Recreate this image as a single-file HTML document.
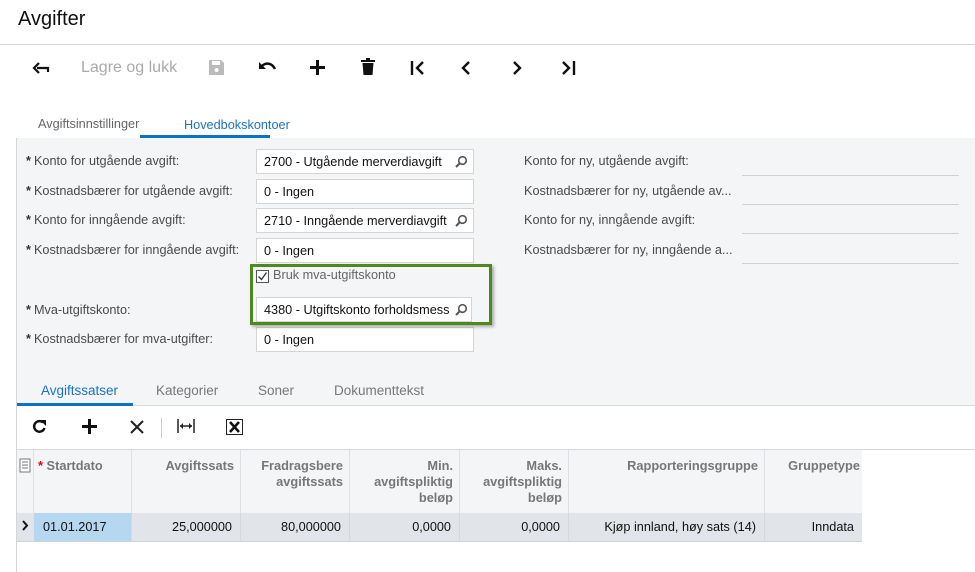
<!DOCTYPE html>
<html><head><meta charset="utf-8"><style>
*{margin:0;padding:0;box-sizing:border-box}
body{width:975px;height:572px;overflow:hidden;background:#fff;font-family:"Liberation Sans",Arial,sans-serif;position:relative;color:#222}
.a{position:absolute}
.lbl{position:absolute;font-size:12.7px;color:#4a4a4a;white-space:nowrap}
.lbl b{font-weight:bold;color:#333;margin-right:3px}
.inp{position:absolute;left:256px;width:218px;height:25px;background:#fff;border:1px solid #d5d5d5;font-size:12.7px;padding:5px 0 0 7px;color:#111;white-space:nowrap;overflow:hidden}
.ul{position:absolute;left:742px;width:217px;border-bottom:1px solid #d0d0d0}
.th{position:absolute;top:450px;height:63px;border-right:1px solid #dde0e4;font-size:12.8px;font-weight:bold;color:#777;text-align:right;padding:8px 6px 0 0;line-height:16px}
.td{position:absolute;top:513px;height:28px;font-size:12.7px;text-align:right;padding:7px 8px 0 0;color:#111;border-right:1px solid #d5d8dc}
svg{position:absolute}
</style></head><body>
<div class="a" style="left:18px;top:8px;font-size:20px;color:#111">Avgifter</div>
<div class="a" style="left:0;top:44px;width:975px;border-top:1px solid #d5d5d5"></div>
<svg style="left:32px;top:60px" width="18" height="16" viewBox="0 0 18 16"><path d="M16 12V8H5" stroke="#111" stroke-width="2.2" fill="none"/><path d="M7 3L2 8l5 5" stroke="#111" stroke-width="2.2" fill="none"/></svg>
<div class="a" style="left:81px;top:59px;font-size:16px;color:#aaa">Lagre og lukk</div>
<svg style="left:208px;top:59px" width="17" height="17" viewBox="0 0 17 17"><path d="M1 1h12l3 3v12H1z" fill="#bbb"/><rect x="4" y="2" width="8" height="4" fill="#fff"/><circle cx="8.5" cy="11" r="2" fill="#fff"/></svg>
<svg style="left:258px;top:60px" width="20" height="14" viewBox="0 0 20 14"><path d="M4 6c4-4 10-3 13 3" stroke="#111" stroke-width="2.5" fill="none"/><path d="M1 2v7h7z" fill="#111"/></svg>
<svg style="left:310px;top:60px" width="15" height="15" viewBox="0 0 15 15"><path d="M7.5 0v15M0 7.5h15" stroke="#111" stroke-width="3"/></svg>
<svg style="left:361px;top:58px" width="14" height="17" viewBox="0 0 14 17"><rect x="0" y="2" width="14" height="2" fill="#111"/><rect x="5" y="0" width="4" height="2" fill="#111"/><path d="M1.5 5h11l-1 12h-9z" fill="#111"/></svg>
<svg style="left:410px;top:60px" width="16" height="16" viewBox="0 0 16 16"><path d="M2 1v14" stroke="#111" stroke-width="2.4"/><path d="M13 2L7 8l6 6" stroke="#111" stroke-width="2.4" fill="none"/></svg>
<svg style="left:460px;top:60px" width="12" height="16" viewBox="0 0 12 16"><path d="M9 2L3 8l6 6" stroke="#111" stroke-width="2.4" fill="none"/></svg>
<svg style="left:511px;top:60px" width="12" height="16" viewBox="0 0 12 16"><path d="M3 2l6 6-6 6" stroke="#111" stroke-width="2.4" fill="none"/></svg>
<svg style="left:560px;top:60px" width="16" height="16" viewBox="0 0 16 16"><path d="M14 1v14" stroke="#111" stroke-width="2.4"/><path d="M3 2l6 6-6 6" stroke="#111" stroke-width="2.4" fill="none"/></svg>
<div class="a" style="left:38px;top:117px;font-size:12.7px;color:#666">Avgiftsinnstillinger</div>
<div class="a" style="left:184px;top:118px;font-size:12.7px;color:#1a73c8">Hovedbokskontoer</div>
<div class="a" style="left:140px;top:135px;width:130px;height:3px;background:#0a72c9"></div>
<div class="a" style="left:16px;top:138px;width:959px;height:268px;background:#f4f5f7;border-left:1px solid #d5d5d5"></div>
<div class="lbl" style="left:26px;top:154px"><b>*</b>Konto for utgående avgift:</div>
<div class="lbl" style="left:26px;top:184px"><b>*</b>Kostnadsbærer for utgående avgift:</div>
<div class="lbl" style="left:26px;top:213px"><b>*</b>Konto for inngående avgift:</div>
<div class="lbl" style="left:26px;top:243px"><b>*</b>Kostnadsbærer for inngående avgift:</div>
<div class="lbl" style="left:26px;top:303px"><b>*</b>Mva-utgiftskonto:</div>
<div class="lbl" style="left:26px;top:332px"><b>*</b>Kostnadsbærer for mva-utgifter:</div>
<div class="inp" style="top:149px">2700 - Utgående merverdiavgift</div>
<div class="inp" style="top:179px">0 - Ingen</div>
<div class="inp" style="top:208px">2710 - Inngående merverdiavgift</div>
<div class="inp" style="top:238px">0 - Ingen</div>
<div class="inp" style="top:297px;width:216px;padding-right:26px"><div style="width:185px;overflow:hidden">4380 - Utgiftskonto forholdsmessig</div></div>
<div class="inp" style="top:327px">0 - Ingen</div>
<svg style="left:455px;top:155px" width="13" height="13" viewBox="0 0 13 13"><circle cx="7.5" cy="5.5" r="3.8" stroke="#555" stroke-width="1.6" fill="none"/><path d="M5 8l-4 4" stroke="#555" stroke-width="2"/></svg>
<svg style="left:455px;top:214px" width="13" height="13" viewBox="0 0 13 13"><circle cx="7.5" cy="5.5" r="3.8" stroke="#555" stroke-width="1.6" fill="none"/><path d="M5 8l-4 4" stroke="#555" stroke-width="2"/></svg>
<svg style="left:455px;top:303px" width="13" height="13" viewBox="0 0 13 13"><circle cx="7.5" cy="5.5" r="3.8" stroke="#555" stroke-width="1.6" fill="none"/><path d="M5 8l-4 4" stroke="#555" stroke-width="2"/></svg>
<div class="a" style="left:250px;top:264px;width:242px;height:61px;border:3px solid #4c8a1e;box-shadow:2px 2px 3px rgba(0,0,0,.3)"></div>
<svg style="left:256px;top:270px" width="13" height="13" viewBox="0 0 13 13"><rect x=".5" y=".5" width="12" height="12" fill="#fff" stroke="#555"/><path d="M2.5 6.5l3 3 5-7" stroke="#333" stroke-width="1.3" fill="none"/></svg>
<div class="lbl" style="left:273px;top:268px;color:#666">Bruk mva-utgiftskonto</div>
<div class="lbl" style="left:524px;top:154px">Konto for ny, utgående avgift:</div>
<div class="lbl" style="left:524px;top:184px">Kostnadsbærer for ny, utgående av...</div>
<div class="lbl" style="left:524px;top:213px">Konto for ny, inngående avgift:</div>
<div class="lbl" style="left:524px;top:243px">Kostnadsbærer for ny, inngående a...</div>
<div class="ul" style="top:175px"></div><div class="ul" style="top:204px"></div><div class="ul" style="top:233px"></div><div class="ul" style="top:263px"></div>
<div class="a" style="left:16px;top:405px;width:959px;border-top:1px solid #d5d8dc"></div>
<div class="a" style="left:41px;top:383px;font-size:13.5px;color:#1a73c8">Avgiftssatser</div>
<div class="a" style="left:156px;top:383px;font-size:13.5px;color:#777">Kategorier</div>
<div class="a" style="left:258px;top:383px;font-size:13.5px;color:#777">Soner</div>
<div class="a" style="left:334px;top:383px;font-size:13.5px;color:#777">Dokumenttekst</div>
<div class="a" style="left:17px;top:403px;width:116px;height:3px;background:#0a72c9"></div>
<div class="a" style="left:16px;top:406px;height:166px;border-left:1px solid #d5d5d5"></div>
<svg style="left:32px;top:419px" width="15" height="15" viewBox="0 0 15 15"><path d="M12.5 9A5.3 5.3 0 1 1 11 3.5" stroke="#111" stroke-width="2.4" fill="none"/><path d="M8 1h6v6z" fill="#111"/></svg>
<svg style="left:82px;top:419px" width="15" height="15" viewBox="0 0 15 15"><path d="M7.5 0v15M0 7.5h15" stroke="#111" stroke-width="3"/></svg>
<svg style="left:130px;top:420px" width="14" height="14" viewBox="0 0 14 14"><path d="M1 1l12 12M13 1L1 13" stroke="#222" stroke-width="2"/></svg>
<div class="a" style="left:161px;top:418px;height:20px;border-left:1px solid #ccc"></div>
<svg style="left:177px;top:419px" width="18" height="14" viewBox="0 0 18 14"><path d="M1 0v14M17 0v14M3 7h12" stroke="#222" stroke-width="1.5"/><path d="M3 7l3-3v6zM15 7l-3-3v6z" fill="#222"/></svg>
<svg style="left:226px;top:419px" width="17" height="16" viewBox="0 0 17 16"><rect x=".5" y=".5" width="16" height="15" fill="#fff" stroke="#222"/><path d="M4 3l9 10M13 3L4 13" stroke="#111" stroke-width="2.6"/></svg>
<div class="a" style="left:16px;top:449px;width:959px;border-top:1px solid #d5d8dc"></div>
<div class="a" style="left:17px;top:450px;width:845px;height:63px;background:#f4f5f7"></div>
<div class="a" style="left:17px;top:513px;width:845px;height:29px;background:#e1e4e8;border-bottom:1px solid #d0d3d7"></div>
<div class="th" style="left:17px;width:17px"></div>
<svg style="left:19px;top:458px" width="12" height="15" viewBox="0 0 12 15"><rect x="1" y="1" width="10" height="13" fill="#fff" stroke="#777"/><path d="M3 4h6M3 7h6M3 10h6" stroke="#777"/></svg>
<div class="th" style="left:34px;width:98px;text-align:left;padding-left:4px"><span style="color:#e00">*</span> Startdato</div>
<div class="th" style="left:132px;width:109px">Avgiftssats</div>
<div class="th" style="left:241px;width:109px">Fradragsbere<br>avgiftssats</div>
<div class="th" style="left:350px;width:110px">Min.<br>avgiftspliktig<br>beløp</div>
<div class="th" style="left:460px;width:109px">Maks.<br>avgiftspliktig<br>beløp</div>
<div class="th" style="left:569px;width:196px">Rapporteringsgruppe</div>
<div class="th" style="left:765px;width:97px;border-right:none;padding-right:2px;overflow:hidden">Gruppetype</div>
<svg style="left:21px;top:520px" width="8" height="11" viewBox="0 0 8 11"><path d="M2 1l4 4.5L2 10" stroke="#111" stroke-width="2" fill="none"/></svg>
<div class="td" style="left:34px;width:98px;background:#b6d7f0;text-align:left;padding-left:9px">01.01.2017</div>
<div class="td" style="left:132px;width:109px">25,000000</div>
<div class="td" style="left:241px;width:109px">80,000000</div>
<div class="td" style="left:350px;width:110px">0,0000</div>
<div class="td" style="left:460px;width:109px">0,0000</div>
<div class="td" style="left:569px;width:196px">Kjøp innland, høy sats (14)</div>
<div class="td" style="left:765px;width:97px;border-right:none">Inndata</div>
</body></html>
